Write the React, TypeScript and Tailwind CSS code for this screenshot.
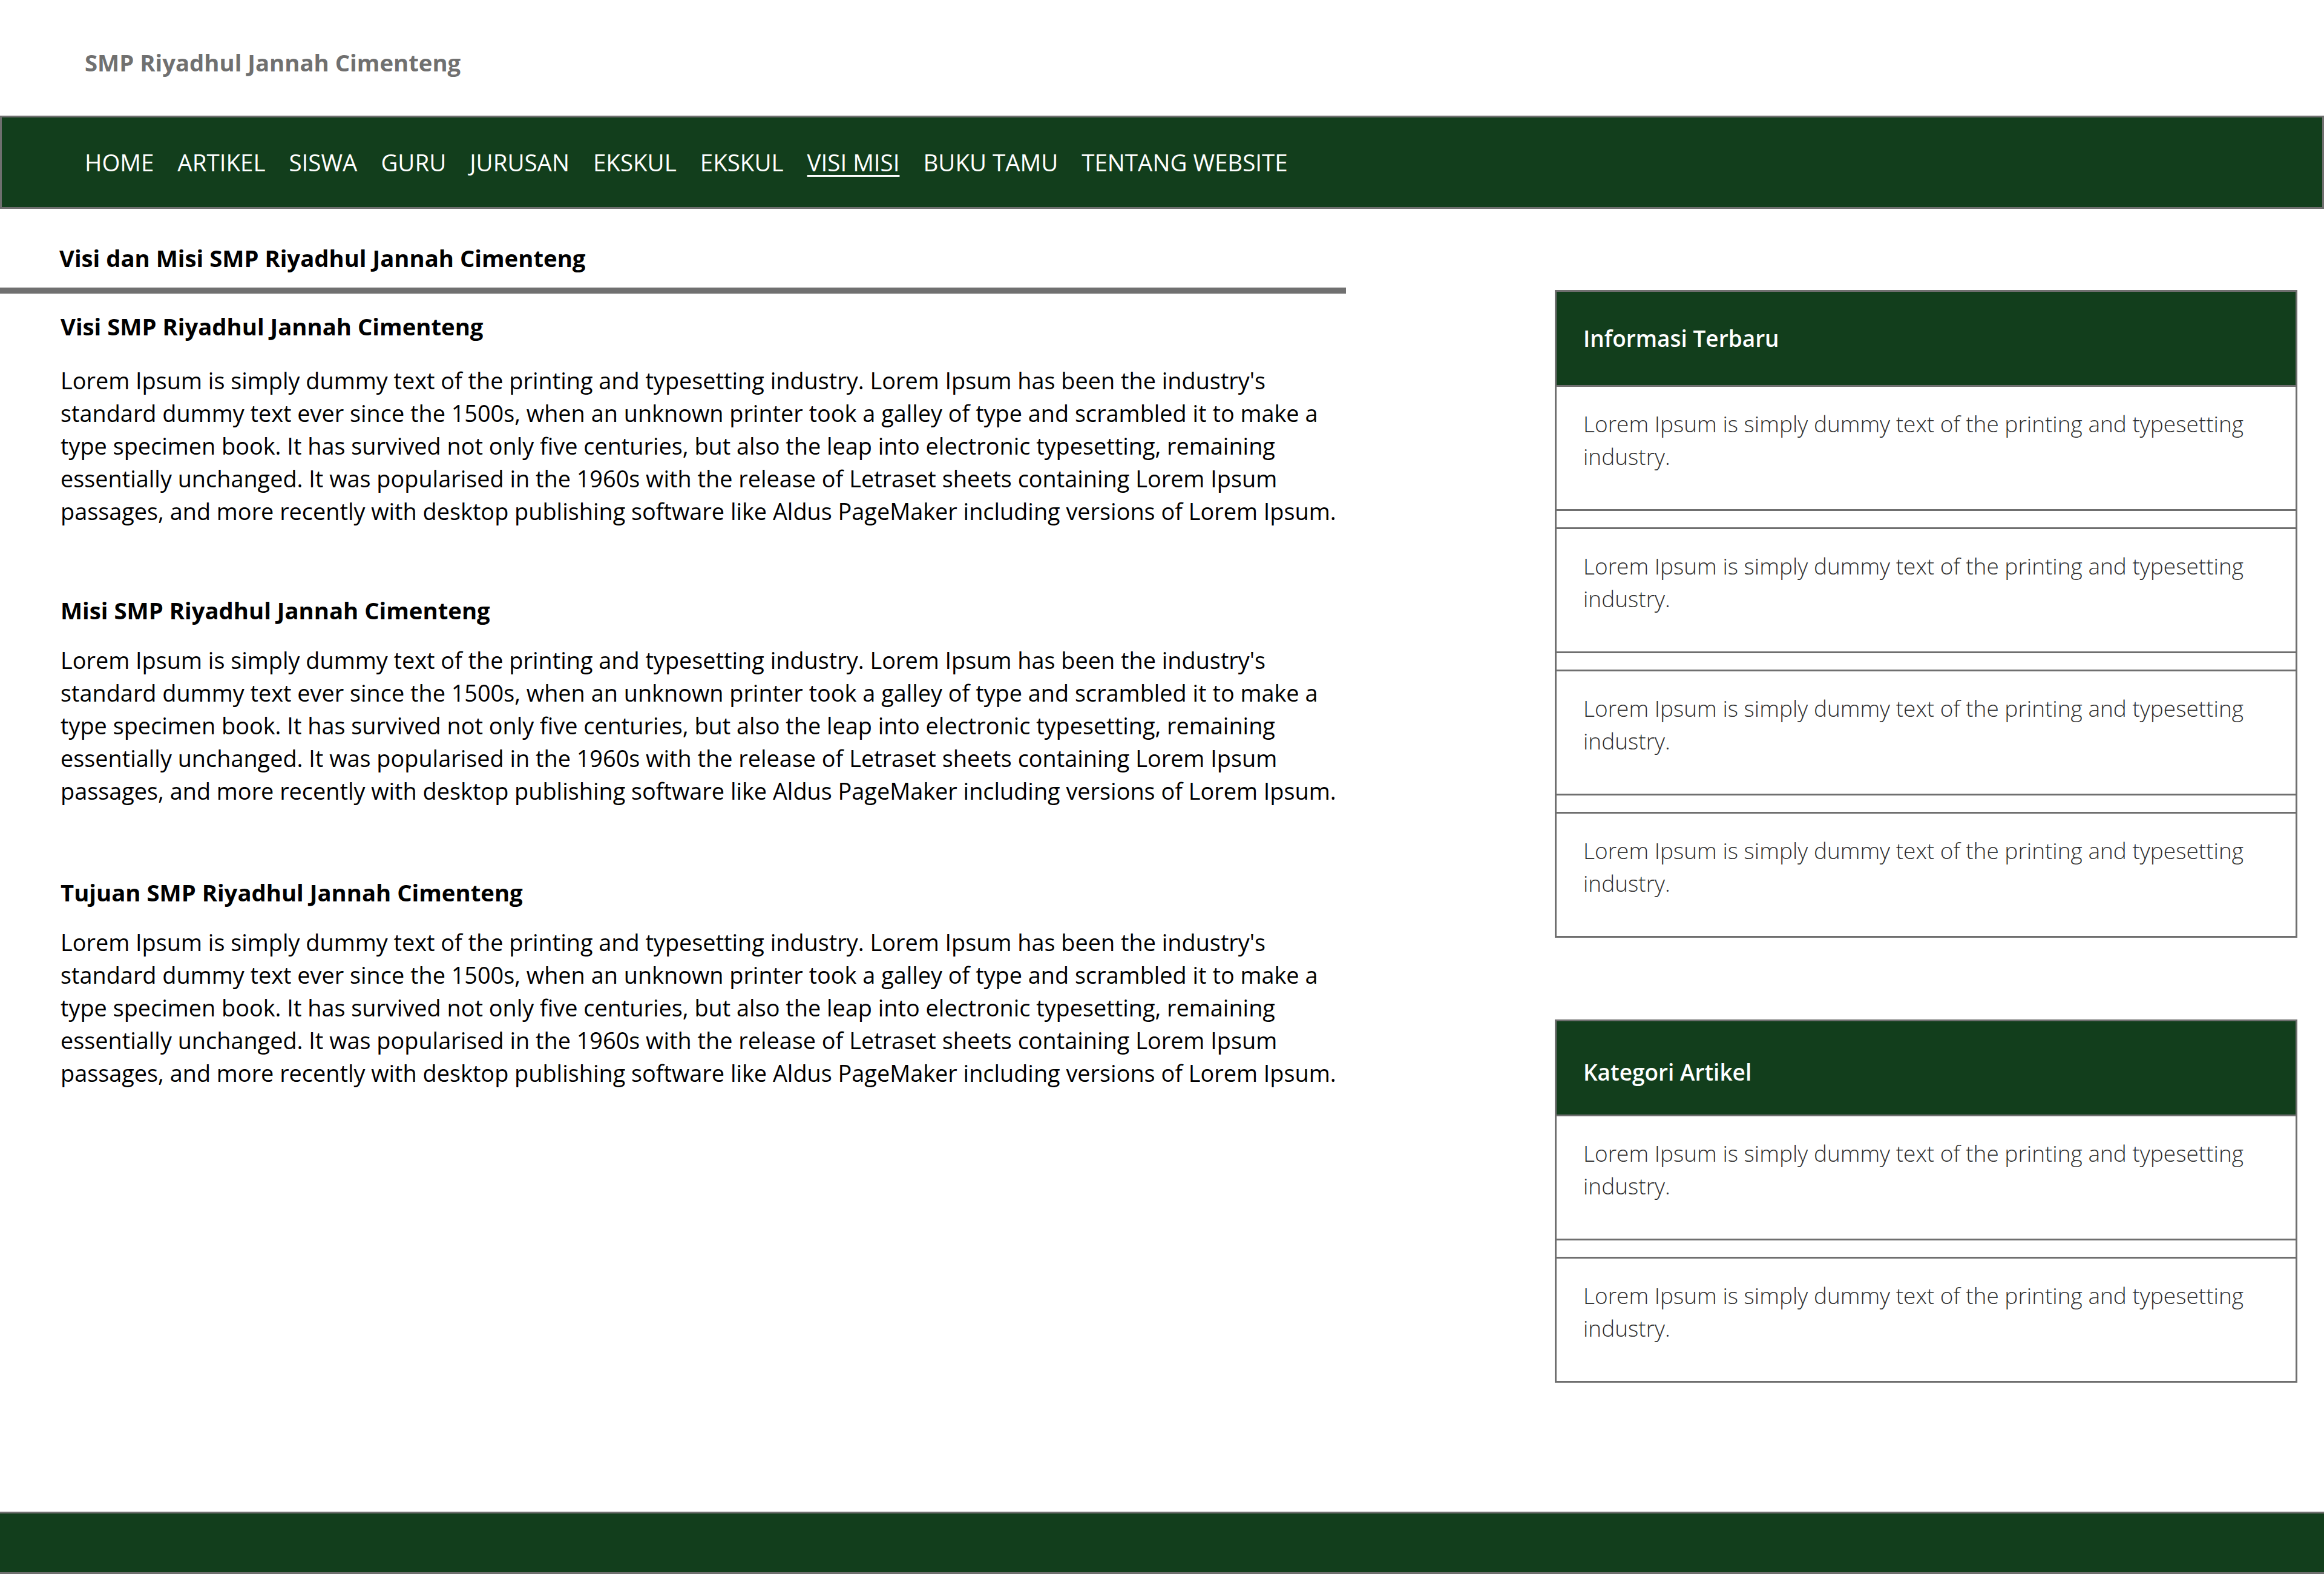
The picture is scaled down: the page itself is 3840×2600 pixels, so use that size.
const navItems = [
  "HOME",
  "ARTIKEL",
  "SISWA",
  "GURU",
  "JURUSAN",
  "EKSKUL",
  "EKSKUL",
  "VISI MISI",
  "BUKU TAMU",
  "TENTANG WEBSITE",
];

const lorem =
  "Lorem Ipsum is simply dummy text of the printing and typesetting industry. Lorem Ipsum has been the industry's standard dummy text ever since the 1500s, when an unknown printer took a galley of type and scrambled it to make a type specimen book. It has survived not only five centuries, but also the leap into electronic typesetting, remaining essentially unchanged. It was popularised in the 1960s with the release of Letraset sheets containing Lorem Ipsum passages, and more recently with desktop publishing software like Aldus PageMaker including versions of Lorem Ipsum.";

const shortLorem =
  "Lorem Ipsum is simply dummy text of the printing and typesetting industry.";

const sections = [
  { title: "Visi SMP Riyadhul Jannah Cimenteng", gap: "mt-[27px] pl-[100px]", para: "mt-[36px]" },
  { title: "Misi SMP Riyadhul Jannah Cimenteng", gap: "mt-[109px] pl-[100px]", para: "mt-[29px]" },
  { title: "Tujuan SMP Riyadhul Jannah Cimenteng", gap: "mt-[113px] pl-[100px]", para: "mt-[29px]" },
];

function SideCard({
  title,
  count,
  titleClass,
}: {
  title: string;
  count: number;
  titleClass: string;
}) {
  const items = Array.from({ length: count }, (_, i) => i);

  return (
    <div className="border-[3px] border-[#6f6f6f]">
      <div className="flex h-[157px] items-center border-b-[3px] border-[#6f6f6f] bg-[#123e1c] pl-[44px]">
        <h3 className={titleClass}>{title}</h3>
      </div>
      {items.map((i) => (
        <div key={i}>
          <div
            className={
              i < count - 1
                ? "h-[205px] border-b-[3px] border-[#6f6f6f] px-[44px] pt-[34px]"
                : "h-[202px] px-[44px] pt-[34px]"
            }
          >
            <p className="text-[37px] leading-[54px] font-light text-[#2e2e2e]">
              {shortLorem}
            </p>
          </div>
          {i < count - 1 ? (
            <div className="h-[30px] border-b-[3px] border-[#6f6f6f]" />
          ) : null}
        </div>
      ))}
    </div>
  );
}

export default function App() {
  return (
    <div className="flex min-h-[2600px] flex-col bg-white font-['Segoe_UI','Open_Sans',sans-serif]">
      <header className="h-[191px] pt-[76px] pl-[140px]">
        <h1 className="text-[38.3px] leading-[54px] font-bold text-[#707070]">
          SMP Riyadhul Jannah Cimenteng
        </h1>
      </header>

      <nav className="flex h-[154px] items-center gap-[39px] border-[3px] border-[#6f6f6f] bg-[#123e1c] pl-[137px]">
        {navItems.map((item, index) => (
          <a
            key={index}
            href="#"
            className={
              item === "VISI MISI"
                ? "text-[38.5px] leading-[54px] text-white underline decoration-[3px] underline-offset-[6px]"
                : "text-[38.5px] leading-[54px] text-white"
            }
          >
            {item}
          </a>
        ))}
      </nav>

      <main className="flex flex-1">
        <div className="w-[2224px] pt-[54px]">
          <h2 className="pl-[98px] text-[38.3px] leading-[54px] font-bold text-black">
            Visi dan Misi SMP Riyadhul Jannah Cimenteng
          </h2>
          <div className="mt-[22px] h-[10px] bg-[#707070]" />

          {sections.map((s) => (
            <section key={s.title} className={s.gap}>
              <h3 className="text-[38.3px] leading-[54px] font-bold text-black">
                {s.title}
              </h3>
              <p
                className={`${s.para} pr-[6px] text-[37.85px] leading-[54px] text-black`}
              >
                {lorem}
              </p>
            </section>
          ))}
        </div>

        <aside className="ml-[345px] w-[1227px] pt-[134px]">
          <SideCard
            title="Informasi Terbaru"
            count={4}
            titleClass="text-[37px] leading-[54px] font-semibold text-white"
          />
          <div className="mt-[135px]">
            <SideCard
              title="Kategori Artikel"
              count={2}
              titleClass="pt-[14px] text-[37px] leading-[54px] font-semibold text-white"
            />
          </div>
        </aside>
      </main>

      <footer className="mt-auto h-[103px] border-y-[3px] border-[#6f6f6f] bg-[#123e1c]" />
    </div>
  );
}
